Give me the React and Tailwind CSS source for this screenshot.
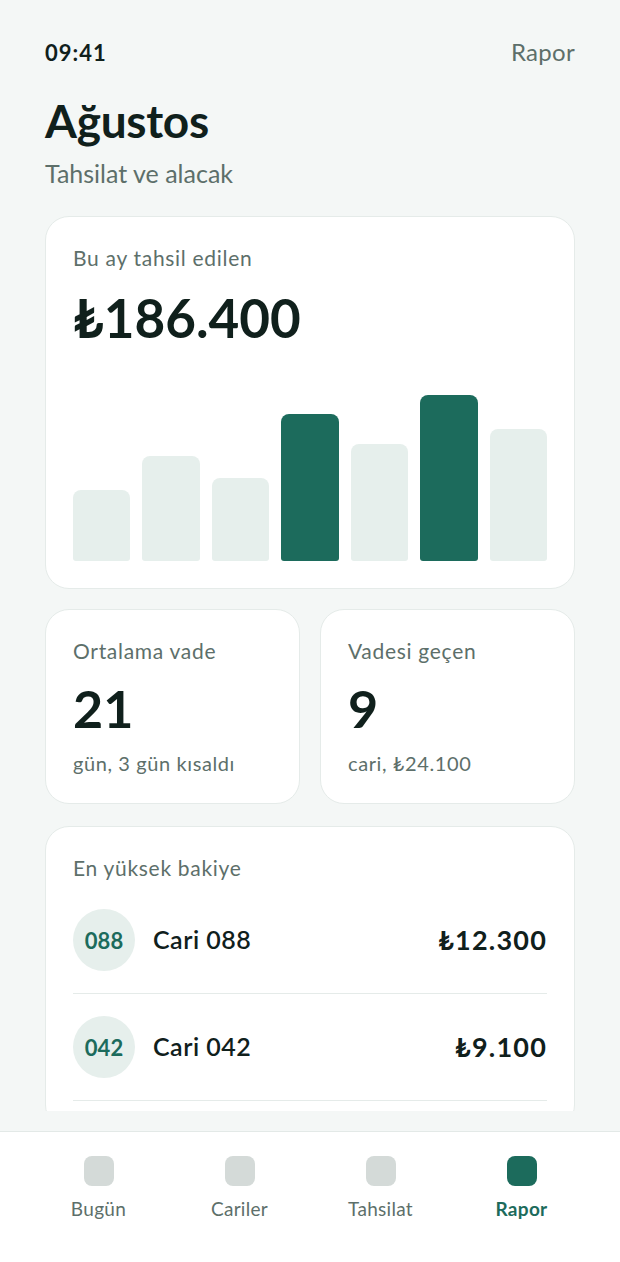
const bars = [
  { h: 71, on: false },
  { h: 105, on: false },
  { h: 83, on: false },
  { h: 147, on: true },
  { h: 117, on: false },
  { h: 166, on: true },
  { h: 132, on: false }
];

const topBalances = [
  { code: '088', name: 'Cari 088', amount: '₺12.300' },
  { code: '042', name: 'Cari 042', amount: '₺9.100' }
];

const tabs = [
  { label: 'Bugün', active: false },
  { label: 'Cariler', active: false },
  { label: 'Tahsilat', active: false },
  { label: 'Rapor', active: true }
];

const StatCard = ({ label, value, note }) => (
  <div className="flex-1 rounded-[24px] border border-[#e5ebe9] bg-white p-[27px]">
    <div className="text-[21px] leading-[28px] tracking-[0.7px] text-[#5d6f6a]">{label}</div>
    <div className="mt-[17px] text-[52px] font-bold leading-none text-[#10201c]">{value}</div>
    <div className="mt-[16px] text-[20px] leading-[26px] tracking-[0.6px] text-[#5d6f6a]">{note}</div>
  </div>
);

const App = () => {
  return (
    <div className="flex h-[1262px] flex-col bg-[#f4f7f6] font-['Lato',sans-serif] text-[#10201c]">
      <div className="mb-[20px] min-h-0 flex-1 overflow-hidden px-[45px] pt-[38px]">
        <div className="flex h-[28px] items-center justify-between">
          <span className="text-[22px] font-bold tracking-[1px] text-[#10201c]">09:41</span>
          <span className="text-[24px] tracking-[0.3px] text-[#5d6f6a]">Rapor</span>
        </div>
        <h1 className="mt-[27px] text-[46px] font-bold leading-[1.2] tracking-[-0.3px]">Ağustos</h1>
        <p className="mt-[10px] text-[25px] leading-[1.2] text-[#5d6f6a]">Tahsilat ve alacak</p>

        <div className="mt-[28px] rounded-[24px] border border-[#e5ebe9] bg-white p-[27px]">
          <div className="text-[21px] leading-[28px] tracking-[0.7px] text-[#5d6f6a]">Bu ay tahsil edilen</div>
          <div className="mt-[19px] text-[53px] font-bold leading-none">₺186.400</div>
          <div className="mt-[37px] flex h-[180px] items-end gap-3">
            {bars.map((bar, i) => (
              <div
                key={i}
                className={bar.on ? 'flex-1 rounded-t-lg rounded-b-[3px] bg-[#1c6b5c]' : 'flex-1 rounded-t-lg rounded-b-[3px] bg-[#e6efec]'}
                style={{ height: bar.h }}
              />
            ))}
          </div>
        </div>

        <div className="mt-[20px] flex gap-[20px]">
          <StatCard label="Ortalama vade" value="21" note="gün, 3 gün kısaldı" />
          <StatCard label="Vadesi geçen" value="9" note="cari, ₺24.100" />
        </div>

        <div className="mt-[22px] rounded-[24px] border border-[#e5ebe9] bg-white px-[27px] pt-[27px] pb-[27px]">
          <div className="text-[21px] leading-[28px] tracking-[0.7px] text-[#5d6f6a]">En yüksek bakiye</div>
          <div className="mt-[5px]">
            {topBalances.map(row => (
              <div key={row.code} className="flex items-center border-b border-[#e5ebe9] py-[22px]">
                <div className="flex h-[62px] w-[62px] items-center justify-center rounded-full bg-[#e6efec] text-[22px] font-bold text-[#1c6b5c]">
                  {row.code}
                </div>
                <span className="ml-[18px] flex-1 text-[25px] font-semibold tracking-[0.5px]">{row.name}</span>
                <span className="text-[27px] font-bold tracking-[1.2px]">{row.amount}</span>
              </div>
            ))}
          </div>
        </div>
      </div>

      <nav className="grid h-[131px] shrink-0 grid-cols-4 border-t border-[#e3e9e7] bg-white px-7 pt-[24px]">
        {tabs.map(tab => (
          <div key={tab.label} className="flex flex-col items-center">
            <div className={tab.active ? 'h-[30px] w-[30px] rounded-lg bg-[#1c6b5c]' : 'h-[30px] w-[30px] rounded-lg bg-[#d4dad8]'} />
            <span
              className={
                tab.active
                  ? 'mt-[10px] text-[19px] font-bold leading-[26px] tracking-[0.3px] text-[#1c6b5c]'
                  : 'mt-[10px] text-[19px] leading-[26px] tracking-[0.3px] text-[#5d6f6a]'
              }
            >
              {tab.label}
            </span>
          </div>
        ))}
      </nav>
    </div>
  );
};

export default App;
